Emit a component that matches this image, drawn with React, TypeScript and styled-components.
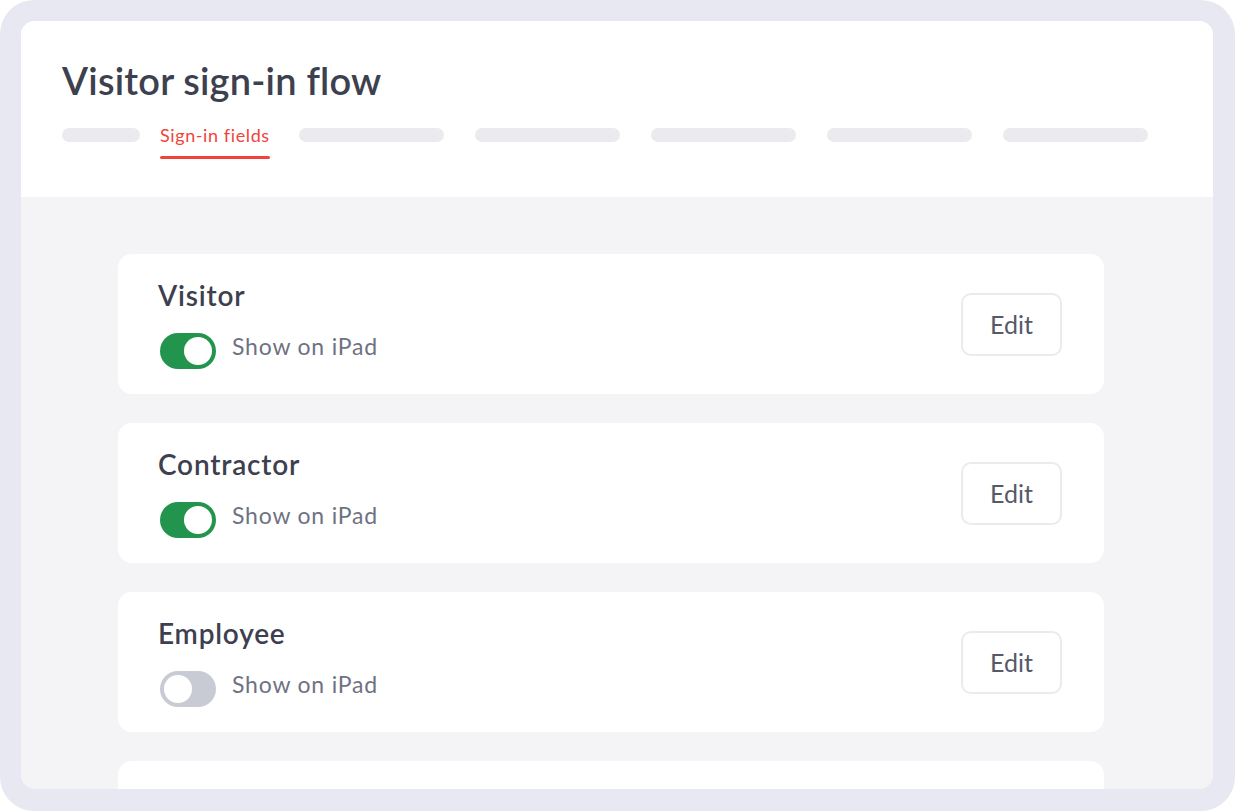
import styled, { createGlobalStyle } from 'styled-components';

const GlobalStyle = createGlobalStyle`
  html, body {
    margin: 0;
    padding: 0;
    background: #ffffff;
  }
  body {
    font-family: Lato, "Noto Sans", sans-serif;
  }
`;

const Frame = styled.div`
  box-sizing: border-box;
  width: 1235px;
  height: 811px;
  padding: 21px 22px 22px 21px;
  border-radius: 34px;
  background: #e8e8f2;
`;

const Panel = styled.div`
  display: flex;
  flex-direction: column;
  height: 100%;
  border-radius: 14px;
  overflow: hidden;
  background: #f4f4f7;
`;

const Header = styled.header`
  box-sizing: border-box;
  flex-shrink: 0;
  height: 176px;
  padding: 39px 41px 0;
  background: #ffffff;
`;

const Title = styled.h1`
  margin: 0;
  font-size: 38px;
  line-height: 40px;
  font-weight: 600;
  letter-spacing: 0.2px;
  color: #3d404e;
`;

const Tabs = styled.nav`
  display: flex;
  align-items: flex-start;
  gap: 31px;
  margin-top: 28px;
`;

const TabPill = styled.div<{ $width: number }>`
  width: ${(p) => p.$width}px;
  height: 14px;
  border-radius: 7px;
  background: #ebebef;
`;

const ActiveTab = styled.div`
  display: flex;
  flex-direction: column;
  margin: -3px -2px 0 -11px;
  font-size: 18px;
  line-height: 20px;
  letter-spacing: 0.6px;
  white-space: nowrap;
  color: #f2433b;

  &::after {
    content: '';
    height: 3px;
    margin-top: 11px;
    border-radius: 2px;
    background: #f2433b;
  }
`;

const Content = styled.main`
  display: flex;
  flex-direction: column;
  gap: 29px;
  padding: 57px 0 0 97px;
`;

const Card = styled.section`
  box-sizing: border-box;
  display: flex;
  align-items: center;
  justify-content: space-between;
  width: 986px;
  height: 140px;
  flex-shrink: 0;
  padding: 0 42px 0 40px;
  border-radius: 14px;
  background: #ffffff;
`;

const CardInfo = styled.div`
  display: flex;
  flex-direction: column;
  gap: 21px;
  align-self: flex-start;
  padding-top: 25px;
`;

const CardTitle = styled.h2`
  margin: 0;
  font-size: 28px;
  line-height: 32px;
  font-weight: 600;
  letter-spacing: 0.8px;
  color: #3d404e;
`;

const ToggleRow = styled.label`
  display: flex;
  align-items: center;
  gap: 16px;
  margin-left: 2px;
  font-size: 23px;
  letter-spacing: 0.8px;
  color: #6e7282;
`;

const ToggleText = styled.span`
  margin-bottom: 9px;
`;

const Switch = styled.span<{ $on: boolean }>`
  position: relative;
  width: 56px;
  height: 36px;
  border-radius: 18px;
  background: ${(p) => (p.$on ? '#23944d' : '#c9cbd4')};

  &::after {
    content: '';
    position: absolute;
    top: 4px;
    left: ${(p) => (p.$on ? '24px' : '4px')};
    width: 28px;
    height: 28px;
    border-radius: 50%;
    background: #ffffff;
  }
`;

const EditButton = styled.button`
  width: 101px;
  height: 63px;
  border: 2px solid #ebebef;
  border-radius: 10px;
  background: #ffffff;
  font-family: inherit;
  font-size: 25px;
  color: #565a68;
`;

const pills = [145, 145, 145, 145, 145];

const roles = [
  { name: 'Visitor', on: true },
  { name: 'Contractor', on: true },
  { name: 'Employee', on: false },
];

export default function App() {
  return (
    <>
      <GlobalStyle />
      <Frame>
        <Panel>
          <Header>
            <Title>Visitor sign-in flow</Title>
            <Tabs>
              <TabPill $width={78} />
              <ActiveTab>Sign-in fields</ActiveTab>
              {pills.map((w, i) => (
                <TabPill key={i} $width={w} />
              ))}
            </Tabs>
          </Header>
          <Content>
            {roles.map((role) => (
              <Card key={role.name}>
                <CardInfo>
                  <CardTitle>{role.name}</CardTitle>
                  <ToggleRow>
                    <Switch $on={role.on} />
                    <ToggleText>Show on iPad</ToggleText>
                  </ToggleRow>
                </CardInfo>
                <EditButton>Edit</EditButton>
              </Card>
            ))}
            <Card />
          </Content>
        </Panel>
      </Frame>
    </>
  );
}
